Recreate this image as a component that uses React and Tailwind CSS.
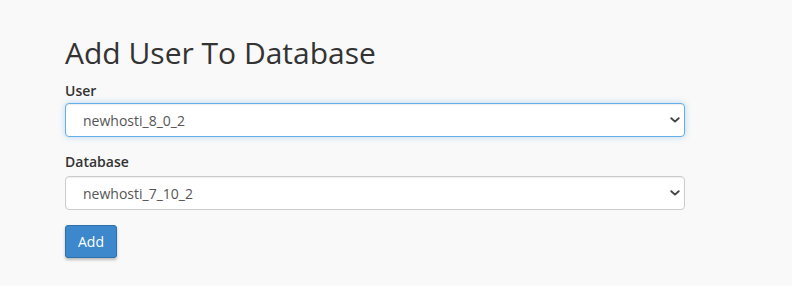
import React from "react";

const Chevron = () => (
  <svg width="10" height="6" viewBox="0 0 10 6" className="shrink-0">
    <path d="M1.3 1.2 L5 4.6 L8.7 1.2" fill="none" stroke="#444" strokeWidth="1.9" strokeLinecap="round" strokeLinejoin="round" />
  </svg>
);

const SelectBox = ({ value, focused }) => (
  <div
    className={`flex items-center justify-between w-[620px] h-[34px] rounded-[4px] bg-white pl-[17px] pr-[4px] text-[14px] text-[#555] ${
      focused
        ? "border border-[#66afe9] shadow-[0_0_6px_rgba(102,175,233,0.45),inset_0_1px_1px_rgba(0,0,0,0.07)]"
        : "border border-[#ccc] shadow-[inset_0_1px_1px_rgba(0,0,0,0.07)]"
    }`}
  >
    <span>{value}</span>
    <Chevron />
  </div>
);

export default function App() {
  return (
    <div className="min-h-[286px] bg-[#f9f9f9] font-['Open_Sans',sans-serif] text-[#333]">
      <div className="pl-[65px] pt-[33px]">
        <h1 className="text-[30px] leading-[40px] font-normal text-[#333]">Add User To Database</h1>
        <div className="mt-[8px]">
          <label className="block text-[14px] font-semibold leading-[20px] mb-[2px]">User</label>
          <SelectBox value="newhosti_8_0_2" focused />
        </div>
        <div className="mt-[15px]">
          <label className="block text-[14px] font-semibold leading-[20px] mb-[4px]">Database</label>
          <SelectBox value="newhosti_7_10_2" />
        </div>
        <button className="mt-[15px] h-[33px] w-[52px] rounded-[3px] border border-[#2f70a9] bg-[#3d87cd] text-[14px] text-white shadow-[0_2px_3px_rgba(0,0,0,0.25)]">
          Add
        </button>
      </div>
    </div>
  );
}
